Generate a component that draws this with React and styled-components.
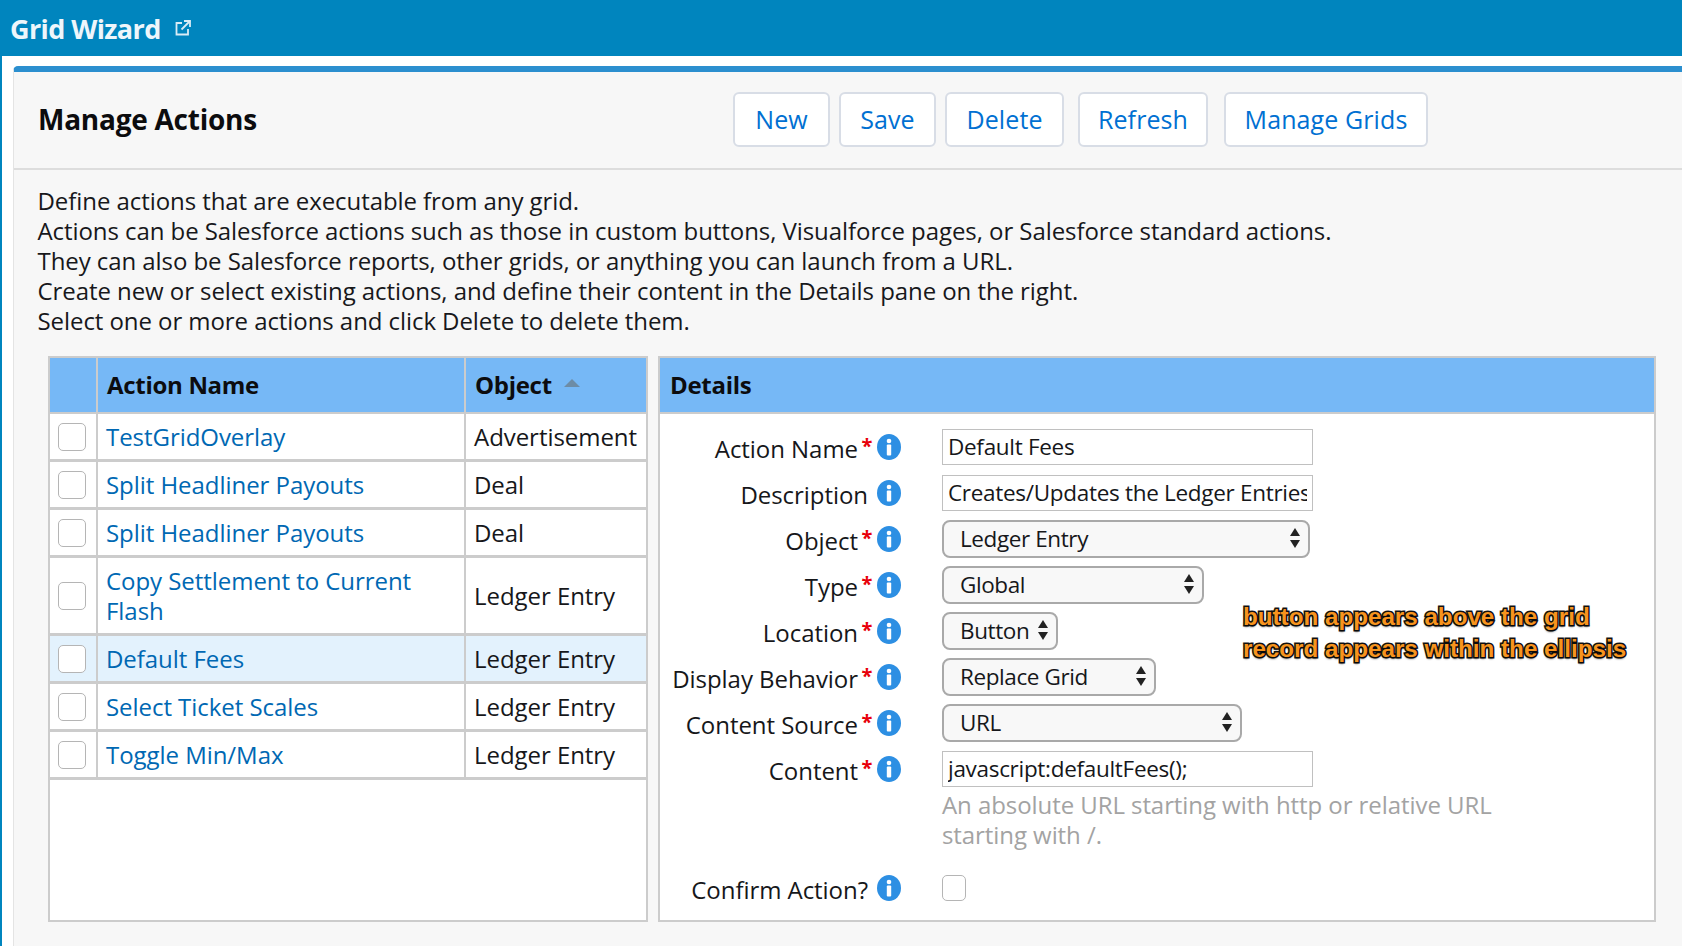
import React from 'react'
import styled, { createGlobalStyle } from 'styled-components'

const GlobalStyle = createGlobalStyle`
    html, body {
        margin: 0;
        padding: 0;
        background: #fff;
    }
    body {
        font-family: "Open Sans", "Liberation Sans", sans-serif;
        color: #16171a;
        overflow: hidden;
    }
`

const Page = styled.div`
    width: 1682px;
    height: 946px;
    overflow: hidden;
`

const TopBar = styled.div`
    height: 56px;
    background: #0085be;
    display: flex;
    align-items: center;
    padding-left: 10px;
    color: #eef6fb;
`

const AppTitle = styled.div`
    font-size: 27px;
    font-weight: 700;
    letter-spacing: -0.6px;
`

const External = styled.svg`
    width: 18px;
    height: 18px;
    margin-left: 13px;
    fill: none;
    stroke: #d9ecf6;
    stroke-width: 1.8;
`

const Shell = styled.div`
    border-left: 2px solid #0085be;
    padding: 10px 0 0 11px;
    height: 880px;
`

const Card = styled.div`
    height: 100%;
    background: #f7f7f7;
    border-top: 6px solid #2b8fcf;
    border-left: 1px solid #e4e4e4;
    border-top-left-radius: 5px;
`

const CardHead = styled.div`
    height: 96px;
    border-bottom: 2px solid #dddddd;
    display: flex;
    align-items: center;
    padding-left: 24px;
`

const Title = styled.h1`
    margin: -2px 0 0;
    width: 695px;
    font-size: 28px;
    font-weight: 700;
    color: #0c0c0e;
    letter-spacing: -0.25px;
`

const Buttons = styled.div`
    display: flex;
    margin-top: -2px;
`

const Button = styled.button`
    height: 55px;
    width: ${p => p.$w}px;
    margin-right: ${p => p.$gap}px;
    padding: 0;
    background: #fff;
    border: 2px solid #d8dde6;
    border-radius: 6px;
    color: #0070d2;
    font: 400 25px "Open Sans", sans-serif;
    letter-spacing: 0.1px;
`

const Intro = styled.div`
    padding: 16px 0 20px 23.5px;
    font-size: 24px;
    line-height: 30px;
    letter-spacing: -0.07px;
    color: #17181b;
`

const Panels = styled.div`
    display: flex;
    gap: 10px;
    padding-left: 34px;
`

const Panel = styled.div`
    width: ${p => p.$w}px;
    height: 566px;
    box-sizing: border-box;
    border: 2px solid #cccccc;
    background: #fff;
`

const GridRow = styled.div`
    display: grid;
    grid-template-columns: 46px 368px 1fr;
    height: ${p => p.$h || 48}px;
    box-sizing: border-box;
    border-bottom: 3px solid #cccccc;
    background: ${p => (p.$selected ? '#e3f2fd' : '#fff')};
`

const HeadRow = styled(GridRow)`
    height: 56px;
    background: #76b8f6;
    border-bottom: 2px solid #cccccc;
`

const Cell = styled.div`
    display: flex;
    align-items: center;
    padding-left: 8px;
    font-size: 24px;
    line-height: 30px;
    letter-spacing: -0.05px;
    border-left: ${p => (p.$first ? '0' : '2px solid #cccccc')};
`

const HeadCell = styled(Cell)`
    font-weight: 700;
    color: #0c0c0e;
    letter-spacing: -0.3px;
    padding-left: 9px;
`

const SortArrow = styled.span`
    width: 0;
    height: 0;
    margin: -4px 0 0 12px;
    border-left: 8px solid transparent;
    border-right: 8px solid transparent;
    border-bottom: 8px solid #6d8ca6;
`

const NameLink = styled.a`
    color: #0068b3;
    text-decoration: none;
`

const Check = styled.span`
    display: block;
    width: 28px;
    height: 28px;
    box-sizing: border-box;
    border: 1px solid #b5b5b5;
    border-radius: 5px;
    background: #fff;
`

const SmallCheck = styled(Check)`
    width: 24px;
    height: 26px;
`

const PanelTitle = styled.div`
    height: 56px;
    box-sizing: border-box;
    background: #76b8f6;
    border-bottom: 2px solid #cccccc;
    display: flex;
    align-items: center;
    padding: 0 0 2px 10px;
    font-size: 24px;
    font-weight: 700;
    color: #0c0c0e;
    letter-spacing: -0.3px;
`

const Details = styled.div`
    position: relative;
    padding-top: 10px;
`

const FormRow = styled.div`
    display: grid;
    grid-template-columns: 242px 1fr;
    column-gap: 40px;
    align-items: center;
    height: 46px;
`

const LabelBox = styled.div`
    display: flex;
    align-items: center;
    justify-content: flex-end;
    padding-top: 2px;
    font-size: 24px;
    letter-spacing: -0.05px;
`

const Req = styled.span`
    color: #e8000b;
    font-weight: 700;
    width: 18px;
    text-align: center;
    margin-top: -5px;
    font-size: 20px;
`

const NoReq = styled.span`
    width: 8px;
`

const Info = styled.svg`
    width: 26px;
    height: 26px;
    margin-top: -2px;
    flex: none;
`

const TextInput = styled.input`
    display: block;
    width: 371px;
    height: 36px;
    box-sizing: border-box;
    padding: 0 5px 2px;
    border: 1px solid #c0c0c0;
    background: #fff;
    color: #16171a;
    font: 400 22.5px "Open Sans", sans-serif;
    letter-spacing: -0.3px;
    outline: none;
`

const Select = styled.div`
    width: ${p => p.$w}px;
    height: 38px;
    box-sizing: border-box;
    display: flex;
    align-items: center;
    justify-content: space-between;
    padding: 0 7px 2px 16px;
    background: #f8f8f8;
    border: 2px solid #a9a9a9;
    border-radius: 8px;
    font-size: 22.5px;
    letter-spacing: -0.4px;
`

const Updown = styled.svg`
    width: 12px;
    height: 22px;
    flex: none;
    fill: #222;
`

const Help = styled.div`
    margin: -2px 0 0 282px;
    width: 600px;
    height: 75px;
    box-sizing: border-box;
    font-size: 24px;
    line-height: 30px;
    letter-spacing: -0.07px;
    color: #a3a3a3;
`

const Callout = styled.div`
    position: absolute;
    left: 583px;
    top: 187px;
    font: 700 24.2px/32px "Liberation Sans", Arial, sans-serif;
    color: #f7941e;
    white-space: nowrap;
    -webkit-text-stroke: 3px #111;
    paint-order: stroke fill;
    text-shadow: 0 2px 2px rgba(0, 0, 0, 0.55);
`

const InfoIcon = () => (
    <Info viewBox="0 0 26 26">
        <ellipse cx="13" cy="13" rx="12" ry="13" fill="#2d8fe3" />
        <circle cx="13" cy="7" r="2.3" fill="#fff" />
        <rect x="10.8" y="10.5" width="4.4" height="11" rx="1" fill="#fff" />
    </Info>
)

const rows = [
    { name: 'TestGridOverlay', object: 'Advertisement' },
    { name: 'Split Headliner Payouts', object: 'Deal' },
    { name: 'Split Headliner Payouts', object: 'Deal' },
    { name: 'Copy Settlement to Current Flash', object: 'Ledger Entry', h: 78 },
    { name: 'Default Fees', object: 'Ledger Entry', selected: true },
    { name: 'Select Ticket Scales', object: 'Ledger Entry' },
    { name: 'Toggle Min/Max', object: 'Ledger Entry' },
]

const intro = [
    'Define actions that are executable from any grid.',
    'Actions can be Salesforce actions such as those in custom buttons, Visualforce pages, or Salesforce standard actions.',
    'They can also be Salesforce reports, other grids, or anything you can launch from a URL.',
    'Create new or select existing actions, and define their content in the Details pane on the right.',
    'Select one or more actions and click Delete to delete them.',
]

const Label = ({ text, required = true }) => (
    <LabelBox>
        {text}
        {required ? <Req>*</Req> : <NoReq />}
        <InfoIcon />
    </LabelBox>
)

const Dropdown = ({ width, value }) => (
    <Select $w={width}>
        {value}
        <Updown viewBox="0 0 12 22">
            <path d="M6 1 11 9H1Z" />
            <path d="M6 21 1 13h10Z" />
        </Updown>
    </Select>
)

export default function App() {
    return (
        <Page>
            <GlobalStyle />
            <TopBar>
                <AppTitle>Grid Wizard</AppTitle>
                <External viewBox="0 0 18 18">
                    <path d="M8 4H2.5v11.5H14V10" />
                    <path d="M10 2h6v6" />
                    <path d="M16 2 7.5 10.5" />
                </External>
            </TopBar>
            <Shell>
                <Card>
                    <CardHead>
                        <Title>Manage Actions</Title>
                        <Buttons>
                            <Button $w={97} $gap={9}>New</Button>
                            <Button $w={97} $gap={9}>Save</Button>
                            <Button $w={119} $gap={14}>Delete</Button>
                            <Button $w={130} $gap={16}>Refresh</Button>
                            <Button $w={204} $gap={0}>Manage Grids</Button>
                        </Buttons>
                    </CardHead>
                    <Intro>
                        {intro.map(line => (
                            <div key={line}>{line}</div>
                        ))}
                    </Intro>
                    <Panels>
                        <Panel $w={600}>
                            <HeadRow>
                                <HeadCell $first />
                                <HeadCell>Action Name</HeadCell>
                                <HeadCell>
                                    Object
                                    <SortArrow />
                                </HeadCell>
                            </HeadRow>
                            {rows.map((row, i) => (
                                <GridRow key={i} $h={row.h} $selected={row.selected}>
                                    <Cell $first>
                                        <Check />
                                    </Cell>
                                    <Cell>
                                        <NameLink href="#">{row.name}</NameLink>
                                    </Cell>
                                    <Cell>{row.object}</Cell>
                                </GridRow>
                            ))}
                        </Panel>
                        <Panel $w={998}>
                            <PanelTitle>Details</PanelTitle>
                            <Details>
                                <FormRow>
                                    <Label text="Action Name" />
                                    <TextInput readOnly value="Default Fees" />
                                </FormRow>
                                <FormRow>
                                    <Label text="Description" required={false} />
                                    <TextInput readOnly value="Creates/Updates the Ledger Entries for the Default Fees" />
                                </FormRow>
                                <FormRow>
                                    <Label text="Object" />
                                    <Dropdown width={368} value="Ledger Entry" />
                                </FormRow>
                                <FormRow>
                                    <Label text="Type" />
                                    <Dropdown width={262} value="Global" />
                                </FormRow>
                                <FormRow>
                                    <Label text="Location" />
                                    <Dropdown width={116} value="Button" />
                                </FormRow>
                                <FormRow>
                                    <Label text="Display Behavior" />
                                    <Dropdown width={214} value="Replace Grid" />
                                </FormRow>
                                <FormRow>
                                    <Label text="Content Source" />
                                    <Dropdown width={300} value="URL" />
                                </FormRow>
                                <FormRow>
                                    <Label text="Content" />
                                    <TextInput readOnly value="javascript:defaultFees();" />
                                </FormRow>
                                <Help>
                                    An absolute URL starting with http or relative URL starting with /.
                                </Help>
                                <FormRow>
                                    <Label text="Confirm Action?" required={false} />
                                    <SmallCheck />
                                </FormRow>
                                <Callout>
                                    button appears above the grid
                                    <br />
                                    record appears within the ellipsis
                                </Callout>
                            </Details>
                        </Panel>
                    </Panels>
                </Card>
            </Shell>
        </Page>
    )
}
